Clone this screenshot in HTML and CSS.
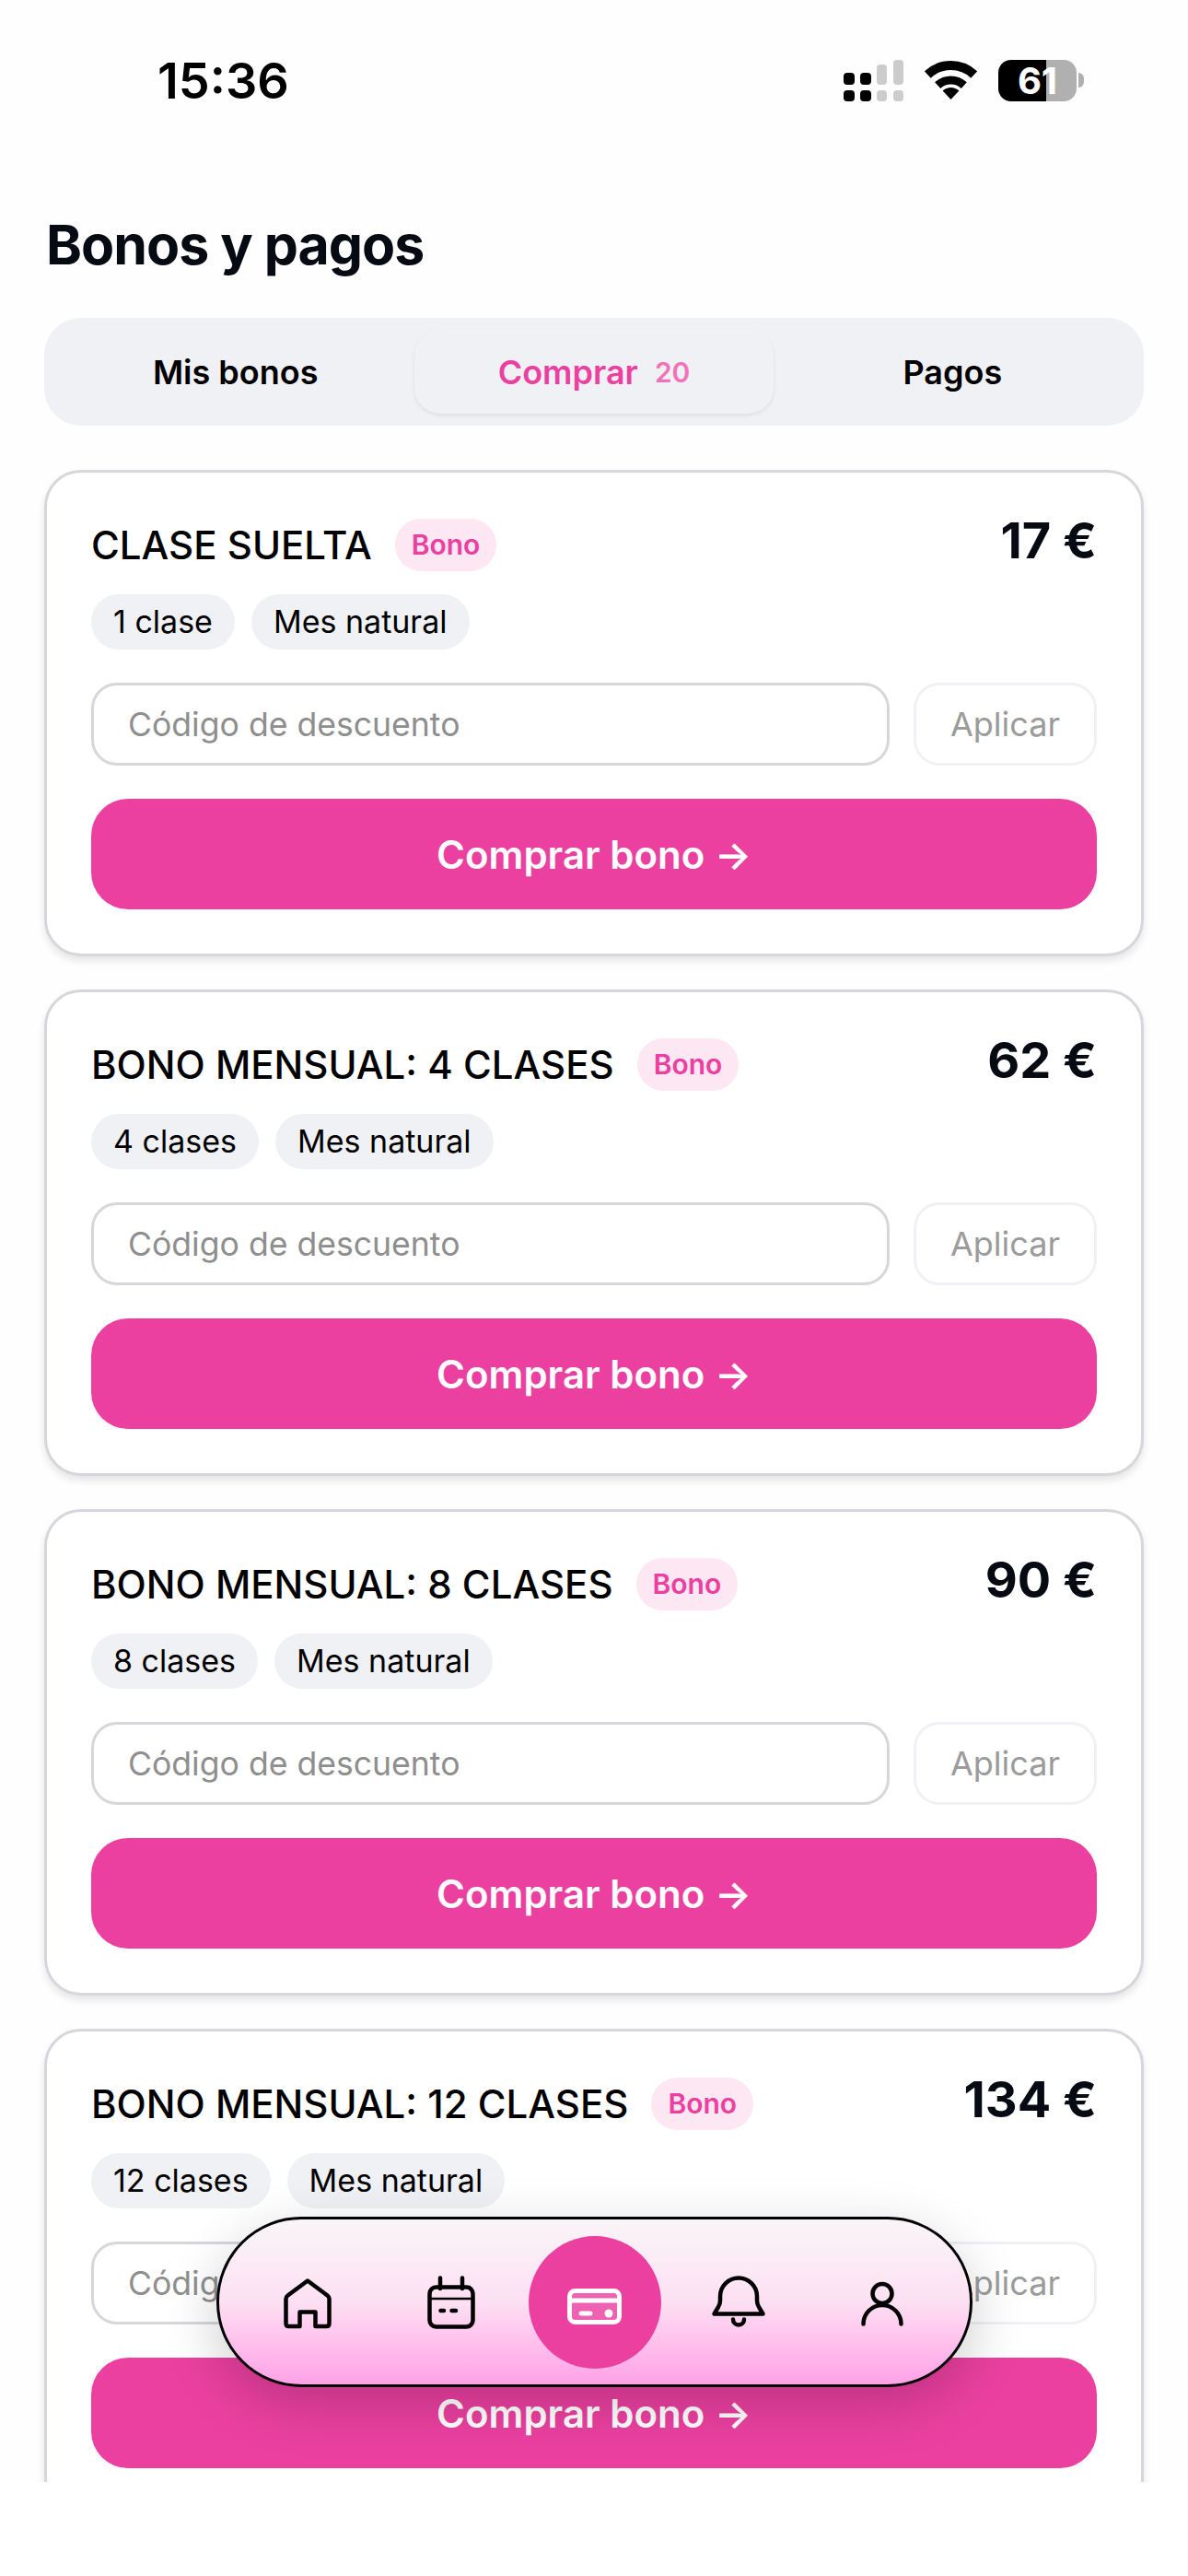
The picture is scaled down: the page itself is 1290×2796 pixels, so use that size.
FILE: index.html
```html
<!DOCTYPE html>
<html lang="es">
<head>
    <meta charset="UTF-8">
    <meta name="viewport" content="width=device-width, initial-scale=1.0">
    <title>Bonos y pagos</title>
    <link rel="stylesheet" href="styles.css">
</head>
<body>
<div class="screen">

    <!-- Status bar -->
    <div class="status-bar">
        <div class="status-time">15:36</div>
        <div class="status-icons">
            <svg class="signal" width="65" height="45" viewBox="0 0 65 45">
                <rect x="0" y="14" width="12" height="13" rx="4" fill="#000"/>
                <rect x="18" y="14" width="12" height="13" rx="4" fill="#000"/>
                <rect x="36" y="5" width="11" height="22" rx="4" fill="#ccc"/>
                <rect x="54" y="0" width="11" height="27" rx="4" fill="#ccc"/>
                <rect x="0" y="33" width="12" height="12" rx="4" fill="#000"/>
                <rect x="18" y="33" width="12" height="12" rx="4" fill="#000"/>
                <rect x="36" y="33" width="11" height="12" rx="4" fill="#ccc"/>
                <rect x="54" y="33" width="11" height="12" rx="4" fill="#ccc"/>
            </svg>
            <svg class="wifi" width="57" height="42" viewBox="0 0 57 42">
                <path d="M3.3 15A37 37 0 0 1 53.7 15" fill="none" stroke="#000" stroke-width="10"/>
                <path d="M14.2 26.6A21 21 0 0 1 42.8 26.6" fill="none" stroke="#000" stroke-width="9"/>
                <path d="M28.5 42L19.6 32.5A13 13 0 0 1 37.4 32.5Z" fill="#000"/>
            </svg>
            <div class="battery">
                <div class="battery-body">61</div>
                <div class="battery-nub"></div>
            </div>
        </div>
    </div>

    <h1 class="page-title">Bonos y pagos</h1>

    <!-- Tabs -->
    <div class="tabs">
        <div class="tab">Mis bonos</div>
        <div class="tab tab-active">Comprar <span class="tab-count">20</span></div>
        <div class="tab">Pagos</div>
    </div>

    <!-- Cards -->
    <div class="card-list">
        <div class="card">
            <div class="card-head">
                <div class="card-name">CLASE SUELTA</div>
                <div class="badge">Bono</div>
                <div class="card-price">17 €</div>
            </div>
            <div class="chips">
                <div class="chip">1 clase</div>
                <div class="chip">Mes natural</div>
            </div>
            <div class="discount-row">
                <input class="discount-input" type="text" placeholder="Código de descuento">
                <button class="apply-button">Aplicar</button>
            </div>
            <button class="buy-button">Comprar bono →</button>
        </div>

        <div class="card">
            <div class="card-head">
                <div class="card-name">BONO MENSUAL: 4 CLASES</div>
                <div class="badge">Bono</div>
                <div class="card-price">62 €</div>
            </div>
            <div class="chips">
                <div class="chip">4 clases</div>
                <div class="chip">Mes natural</div>
            </div>
            <div class="discount-row">
                <input class="discount-input" type="text" placeholder="Código de descuento">
                <button class="apply-button">Aplicar</button>
            </div>
            <button class="buy-button">Comprar bono →</button>
        </div>

        <div class="card">
            <div class="card-head">
                <div class="card-name">BONO MENSUAL: 8 CLASES</div>
                <div class="badge">Bono</div>
                <div class="card-price">90 €</div>
            </div>
            <div class="chips">
                <div class="chip">8 clases</div>
                <div class="chip">Mes natural</div>
            </div>
            <div class="discount-row">
                <input class="discount-input" type="text" placeholder="Código de descuento">
                <button class="apply-button">Aplicar</button>
            </div>
            <button class="buy-button">Comprar bono →</button>
        </div>

        <div class="card">
            <div class="card-head">
                <div class="card-name">BONO MENSUAL: 12 CLASES</div>
                <div class="badge">Bono</div>
                <div class="card-price">134 €</div>
            </div>
            <div class="chips">
                <div class="chip">12 clases</div>
                <div class="chip">Mes natural</div>
            </div>
            <div class="discount-row">
                <input class="discount-input" type="text" placeholder="Código de descuento">
                <button class="apply-button">Aplicar</button>
            </div>
            <button class="buy-button">Comprar bono →</button>
        </div>
    </div>

    <!-- Floating nav -->
    <div class="bottom-nav">
        <div class="nav-item">
            <svg class="nav-icon" width="72" height="72" viewBox="0 0 72 72">
                <path d="M36 12.5L57.5 28.5Q59.5 30 59.5 32V59Q59.5 62 56.5 62H44.5V46.5H27.5V62H15.5Q12.5 62 12.5 59V32Q12.5 30 14.5 28.5Z"/>
            </svg>
        </div>
        <div class="nav-item">
            <svg class="nav-icon" width="72" height="72" viewBox="0 0 72 72">
                <rect x="12.5" y="19.5" width="47" height="43" rx="7"/>
                <path d="M24 9.5V21M48 9.5V21M24.5 45H28M36.5 45H41"/>
                <path class="thin" d="M12.5 32H59.5"/>
            </svg>
        </div>
        <div class="nav-item nav-active">
            <svg class="nav-icon nav-icon-white" width="72" height="72" viewBox="0 0 72 72">
                <rect class="card-fill" x="8.5" y="23.5" width="54" height="34" rx="6"/>
                <path d="M8.5 34H62.5M21 48H31"/>
                <circle class="solid" cx="51" cy="48" r="4.5"/>
            </svg>
        </div>
        <div class="nav-item">
            <svg class="nav-icon" width="72" height="72" viewBox="0 0 72 72">
                <path d="M9.5 48.5H62.5L58 41Q56 38 56 34V29.5A20 20 0 0 0 16 29.5V34Q16 38 14 41Z"/>
                <path d="M30 54.5A6 6 0 0 0 42 54.5"/>
            </svg>
        </div>
        <div class="nav-item">
            <svg class="nav-icon" width="72" height="72" viewBox="0 0 72 72">
                <circle cx="36" cy="26.5" r="10.5"/>
                <path d="M15.5 59.5A20.5 20.5 0 0 1 56.5 59.5"/>
            </svg>
        </div>
    </div>

</div>
</body>
</html>
```

FILE: styles.css
```css
/* Basic Reset */
* {
    margin: 0;
    padding: 0;
    box-sizing: border-box;
}

body {
    font-family: 'Inter', 'Roboto', sans-serif;
    background-color: #fff;
    color: #060a13;
}

.screen {
    position: relative;
    height: 2694px;
    overflow: hidden;
    background-color: #fefefe;
}

/* Status bar */
.status-bar {
    display: flex;
    justify-content: space-between;
    align-items: center;
    height: 174px;
    padding: 0 113px 0 171px;
}

.status-time {
    font-size: 54px;
    font-weight: 600;
    color: #000;
}

.status-icons {
    display: flex;
    align-items: center;
    gap: 23px;
}

.battery {
    display: flex;
    align-items: center;
    gap: 2px;
}

.battery-body {
    width: 85px;
    height: 45px;
    border-radius: 14px;
    background: linear-gradient(90deg, #000 52px, #b0b0b0 52px);
    text-align: center;
    font-size: 40px;
    font-weight: 700;
    line-height: 45px;
    color: #fff;
}

.battery-nub {
    width: 6px;
    height: 16px;
    border-radius: 0 8px 8px 0;
    background-color: #b0b0b0;
}

.page-title {
    margin: 64px 0 0 50px;
    font-size: 59px;
    font-weight: 700;
    line-height: 56px;
    letter-spacing: -1px;
}

/* Tabs */
.tabs {
    display: grid;
    grid-template-columns: repeat(3, 1fr);
    margin: 51px 48px 0;
    padding: 13px;
    height: 117px;
    border-radius: 40px;
    background-color: #f0f1f5;
}

.tab {
    display: flex;
    justify-content: center;
    align-items: center;
    gap: 18px;
    font-size: 36px;
    font-weight: 600;
    color: #000;
}

.tab-active {
    color: #eb40a0;
    border-radius: 28px;
    box-shadow: 0 2px 4px rgba(0, 0, 0, 0.08);
}

.tab-count {
    font-size: 30px;
    font-weight: 600;
    color: #f272b9;
}

/* Cards */
.card-list {
    display: flex;
    flex-direction: column;
    gap: 36px;
    margin: 48px 48px 0;
}

.card {
    height: 528px;
    padding: 48px 48px;
    background-color: #fff;
    border: 3px solid #d6d7dc;
    border-radius: 40px;
    box-shadow: 0 5px 8px rgba(0, 0, 0, 0.1);
}

.card-head {
    display: flex;
    align-items: center;
    height: 60px;
}

.card-name {
    font-size: 42px;
    font-weight: 500;
    color: #000;
}

.badge {
    margin-left: 25px;
    padding: 0 18px;
    height: 57px;
    line-height: 57px;
    font-size: 30px;
    font-weight: 600;
    color: #eb40a0;
    background-color: #fce7f3;
    border-radius: 29px;
}

.card-price {
    margin-left: auto;
    margin-top: -10px;
    font-size: 54px;
    font-weight: 700;
}

.chips {
    display: flex;
    gap: 18px;
    margin-top: 24px;
}

.chip {
    height: 60px;
    line-height: 60px;
    padding: 0 24px;
    font-size: 34px;
    color: #000;
    background-color: #f0f1f5;
    border-radius: 30px;
}

.discount-row {
    display: flex;
    gap: 26px;
    margin-top: 36px;
}

.discount-input {
    flex: 1;
    height: 90px;
    padding: 0 37px;
    font-family: inherit;
    font-size: 35.6px;
    color: #000;
    background-color: #fff;
    border: 3px solid #d6d7dc;
    border-radius: 28px;
}

.discount-input::placeholder {
    color: #8e8e8e;
    opacity: 1;
}

.apply-button {
    width: 199px;
    height: 90px;
    font-family: inherit;
    font-size: 36px;
    color: #9b9b9b;
    background-color: #fff;
    border: 3px solid #f0f1f5;
    border-radius: 28px;
}

.buy-button {
    display: block;
    width: 100%;
    height: 120px;
    margin-top: 36px;
    font-family: inherit;
    font-size: 42px;
    font-weight: 600;
    color: #fff;
    background-color: #eb40a0;
    border: none;
    border-radius: 40px;
}

/* Floating nav */
.bottom-nav {
    position: absolute;
    top: 2406px;
    left: 235px;
    width: 821px;
    height: 185px;
    display: flex;
    justify-content: center;
    align-items: center;
    background: linear-gradient(180deg, #f9f5f8 0%, #fbeaf5 28%, #fde0f3 50%, #ffc0ec 75%, #ffa2e8 100%);
    border: 3px solid #000;
    border-radius: 92px;
    box-shadow: 0 18px 60px rgba(0, 0, 0, 0.2);
}

.nav-item {
    display: flex;
    justify-content: center;
    align-items: center;
    width: 156px;
    height: 144px;
}

.nav-active {
    border-radius: 50%;
    width: 144px;
    margin: 0 6px;
    background-color: #eb40a0;
}

.nav-icon {
    fill: none;
    stroke: #000;
    stroke-width: 4.5;
    stroke-linecap: round;
    stroke-linejoin: round;
}

.nav-icon .thin {
    stroke-width: 2.5;
}

.nav-icon-white {
    stroke: #fff;
    stroke-width: 5;
}

.nav-icon-white .card-fill {
    fill: rgba(255, 255, 255, 0.18);
}

.nav-icon-white .solid {
    fill: #fff;
    stroke: none;
}
```
